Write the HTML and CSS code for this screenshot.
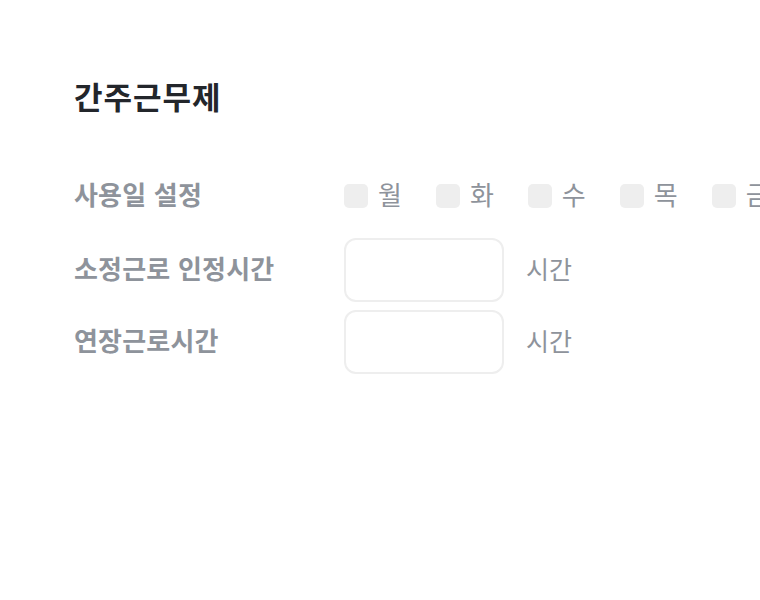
FILE: index.html
```html
<!DOCTYPE html>
<html lang="ko">
<head>
<meta charset="utf-8">
<link rel="stylesheet" href="styles.css">
</head>
<body>
<div class="page">
  <h1 class="title">간주근무제</h1>
  <div class="form">
    <div class="row row-days">
      <div class="label">사용일 설정</div>
      <div class="days">
        <label class="day"><span class="box"></span><span class="day-text">월</span></label>
        <label class="day"><span class="box"></span><span class="day-text">화</span></label>
        <label class="day"><span class="box"></span><span class="day-text">수</span></label>
        <label class="day"><span class="box"></span><span class="day-text">목</span></label>
        <label class="day"><span class="box"></span><span class="day-text">금</span></label>
      </div>
    </div>
    <div class="row">
      <div class="label">소정근로 인정시간</div>
      <div class="field"><input class="input" type="text"><span class="unit">시간</span></div>
    </div>
    <div class="row">
      <div class="label">연장근로시간</div>
      <div class="field"><input class="input" type="text"><span class="unit">시간</span></div>
    </div>
  </div>
</div>
</body>
</html>
```
FILE: styles.css
```css
html, body { margin: 0; padding: 0; background: #fff; }
body { font-family: "Noto Sans CJK KR", "Noto Sans", sans-serif; overflow: hidden; width: 760px; }
.page { padding: 74px 0 0 74px; }
.title { margin: 0; font-size: 31px; font-weight: 700; color: #23262b; line-height: 44px; letter-spacing: 1px; }
.form { margin-top: 50px; display: flex; flex-direction: column; gap: 8px; }
.row { display: flex; align-items: center; height: 64px; }
.row-days { height: 56px; margin-bottom: 6px; }
.label { width: 270px; flex: none; font-size: 26px; line-height: 30px; padding-bottom: 4px; font-weight: 700; color: #8e939b; letter-spacing: 0.2px; }
.days { display: flex; gap: 34px; white-space: nowrap; }
.day { display: flex; align-items: center; gap: 10px; }
.box { width: 24px; height: 24px; border-radius: 5px; background: #eeeeee; }
.day-text { font-size: 26px; line-height: 30px; padding-bottom: 4px; color: #8e939b; }
.field { display: flex; align-items: center; gap: 22px; }
.input { box-sizing: border-box; width: 160px; height: 64px; border: 2px solid #eeeeee; border-radius: 12px; margin: 0; padding: 0 12px; outline: none; background: #fff; font: inherit; }
.unit { font-size: 25px; line-height: 30px; padding-bottom: 4px; color: #8e939b; }
```
